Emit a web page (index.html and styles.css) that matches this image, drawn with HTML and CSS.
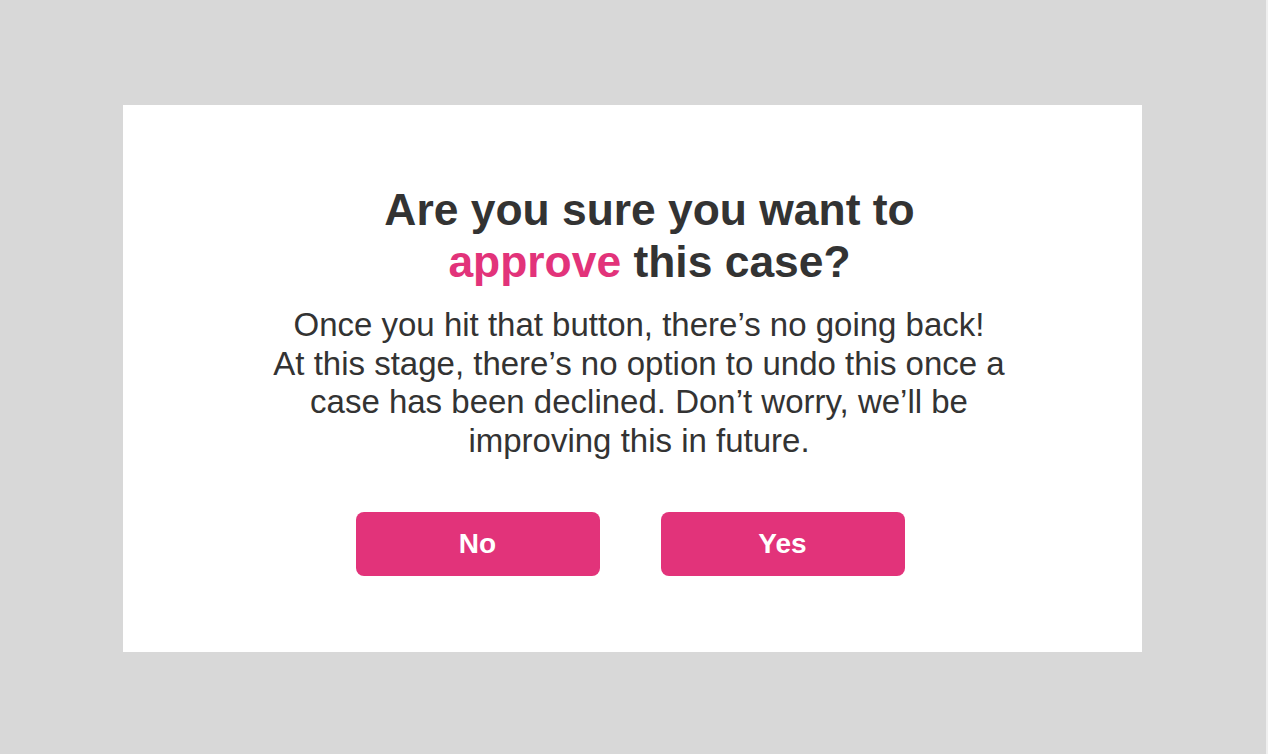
FILE: index.html
```html
<!DOCTYPE html>
<html lang="en">
<head>
  <meta charset="UTF-8" />
  <meta name="viewport" content="width=device-width, initial-scale=1.0"/>
  <link rel="stylesheet" href="styles.css">
</head>
<body>
  <div class="confirm-card">
    <h1 class="confirm-title">Are you sure you want to<br><span class="accent">approve</span> this case?</h1>
    <p class="confirm-text">Once you hit that button, there’s no going back!<br>At this stage, there’s no option to undo this once a<br>case has been declined. Don’t worry, we’ll be<br>improving this in future.</p>
    <div class="confirm-actions">
      <button class="pinkbtn">No</button>
      <button class="pinkbtn">Yes</button>
    </div>
  </div>
</body>
</html>
```

FILE: styles.css
```css
body {
  margin: 0;
  background-color: #d8d8d8;
  padding-top: 105px;
  padding-left: 123px;
  min-height: 754px;
  box-sizing: border-box;
  border-right: 2px solid #efefef;
  font-family: "Liberation Sans", Arial, sans-serif;
  color: #333333;
}

.confirm-card {
  width: 1019px;
  height: 547px;
  box-sizing: border-box;
  background-color: #ffffff;
  padding-top: 79px;
  display: flex;
  flex-direction: column;
  align-items: center;
}

.confirm-title {
  margin: 0;
  font-size: 44.4px;
  line-height: 52px;
  font-weight: bold;
  text-align: center;
  padding-left: 34px;
}

.accent {
  color: #e2337a;
}

.confirm-text {
  margin: 18px 0 0;
  font-size: 33px;
  line-height: 38.5px;
  text-align: center;
  padding-left: 13px;
}

.confirm-actions {
  display: flex;
  gap: 61px;
  margin-top: 52px;
  padding-right: 5px;
}

.pinkbtn {
  width: 244px;
  height: 64px;
  border: none;
  border-radius: 8px;
  background-color: #e2337a;
  color: #ffffff;
  font-family: "Liberation Sans", Arial, sans-serif;
  font-size: 28px;
  font-weight: bold;
  padding: 0;
}
```
